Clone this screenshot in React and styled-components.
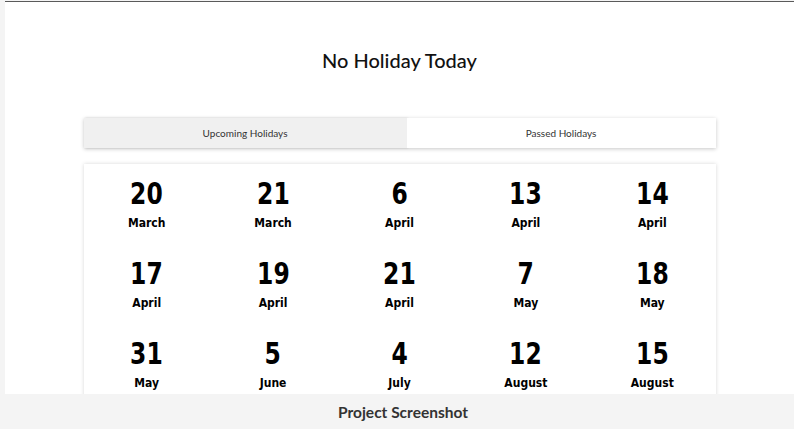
import styled, { createGlobalStyle } from "styled-components";

const GlobalStyle = createGlobalStyle`
    html, body {
        margin: 0;
        padding: 0;
        background: #f4f4f4;
    }
`;

const SPage = styled.div`
    width: 794px;
    height: 429px;
    display: flex;
    flex-direction: column;
    overflow: hidden;
`;

const SFrame = styled.main`
    margin: 1px 0 0 5px;
    height: 392px;
    background: #fff;
    border-top: 1px solid #5a5a5a;
    overflow: hidden;
    display: flex;
    flex-direction: column;
    align-items: center;
`;

const STitle = styled.h1`
    margin: 43px 0 0;
    font-family: "Lato", "Noto Sans", sans-serif;
    font-weight: 500;
    font-size: 20px;
    line-height: 30px;
    color: #111;
`;

const STabs = styled.div`
    margin-top: 43px;
    width: 632px;
    display: flex;
    box-shadow: 0 1px 4px rgba(0, 0, 0, .22);
`;

const STab = styled.div`
    flex: 1 1 auto;
    height: 30px;
    display: flex;
    align-items: center;
    justify-content: center;
    font-family: "Lato", "Noto Sans", sans-serif;
    font-size: 10px;
    color: #333;
    background: ${p => p.$active ? '#f0f0f0' : '#fff'};
    box-shadow: ${p => p.$active ? '1px 0 2px rgba(0,0,0,.12)' : 'none'};
`;

const SCard = styled.section`
    margin-top: 16px;
    width: 632px;
    flex: 1;
    background: #fff;
    box-shadow: 0 0 4px rgba(0, 0, 0, .16);
    display: grid;
    grid-template-columns: repeat(5, 1fr);
    grid-auto-rows: 80px;
    padding-top: 12px;
    align-content: start;
`;

const SDay = styled.div`
    display: flex;
    flex-direction: column;
    align-items: center;
    gap: 5px;
    color: #000;
`;

const SNum = styled.span`
    display: inline-block;
    font-family: "DejaVu Sans Condensed", "DejaVu Sans", sans-serif;
    font-weight: 700;
    font-size: 31px;
    line-height: 34px;
    transform: scaleX(0.84);
`;

const SMonth = styled.span`
    font-family: "DejaVu Sans Condensed", "DejaVu Sans", sans-serif;
    font-weight: 700;
    font-size: 12px;
    line-height: 17px;
`;

const SFooter = styled.footer`
    flex: 1;
    display: flex;
    align-items: center;
    justify-content: center;
    padding-left: 12px;
    font-family: "Lato", "Noto Sans", sans-serif;
    font-weight: 700;
    font-size: 15.5px;
    color: #333;
`;

const holidays = [
    [20, 'March'], [21, 'March'], [6, 'April'], [13, 'April'], [14, 'April'],
    [17, 'April'], [19, 'April'], [21, 'April'], [7, 'May'], [18, 'May'],
    [31, 'May'], [5, 'June'], [4, 'July'], [12, 'August'], [15, 'August'],
];

export default function App() {
    return (
        <SPage>
            <GlobalStyle />
            <SFrame>
                <STitle>No Holiday Today</STitle>
                <STabs>
                    <STab $active>Upcoming Holidays</STab>
                    <STab>Passed Holidays</STab>
                </STabs>
                <SCard>
                    {holidays.map(([d, m], i) => (
                        <SDay key={i}>
                            <SNum>{d}</SNum>
                            <SMonth>{m}</SMonth>
                        </SDay>
                    ))}
                </SCard>
            </SFrame>
            <SFooter>Project Screenshot</SFooter>
        </SPage>
    );
}
